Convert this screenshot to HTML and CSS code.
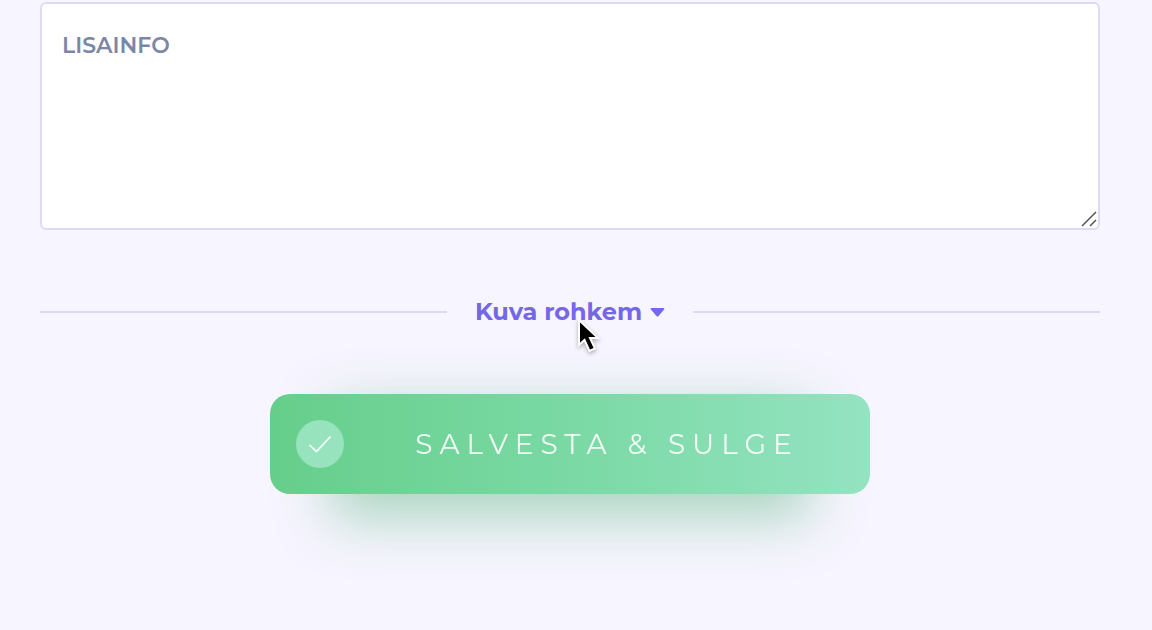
FILE: index.html
```html
<!DOCTYPE html>
<html lang="et">
<head>
    <meta charset="UTF-8">
    <meta name="viewport" content="width=device-width, initial-scale=1.0">
    <title>Lisainfo</title>
    <link rel="stylesheet" href="styles.css">
</head>
<body>
    <form class="details-form">
        <div class="field">
            <textarea id="info" class="field-input" placeholder="LISAINFO" aria-label="LISAINFO"></textarea>
            <svg class="field-grip" viewBox="0 0 16 16" aria-hidden="true">
                <path d="M1 15L15 1M9 15L15 9"/>
            </svg>
        </div>

        <div class="divider">
            <button type="button" class="show-more">
                <span>Kuva rohkem</span>
                <svg class="caret" viewBox="0 0 14 9" aria-hidden="true">
                    <path d="M1.200 0H12.800Q14.600 0.400 13.400 1.800L8 8Q7 9 6 8L0.600 1.800Q-0.600 0.400 1.200 0Z"/>
                </svg>
            </button>
            <svg class="pointer" viewBox="0 0 26 36" aria-hidden="true">
                <path d="M3 2V27L8.500 22L13.500 33L19 30.500L14 20H22Z"/>
            </svg>
        </div>

        <button type="submit" class="save">
            <span class="save-icon">
                <svg viewBox="0 0 24 24" aria-hidden="true">
                    <path d="M1.500 13L8.500 19.500L22.500 4.500"/>
                </svg>
            </span>
            <span class="save-label">SALVESTA &amp; SULGE</span>
        </button>
    </form>
</body>
</html>
```

FILE: styles.css
```css
:root {
    --page: #f7f5ff;
    --border: #dedaf5;
    --purple: #7467e8;
    --muted: #7c87a8;
}

* {
    box-sizing: border-box;
    margin: 0;
    padding: 0;
}

body {
    min-height: 100vh;
    background-color: var(--page);
    font-family: Montserrat, Inter, sans-serif;
}

button {
    border: none;
    font-family: inherit;
    cursor: pointer;
}

.details-form {
    display: flex;
    flex-direction: column;
    padding: 2px 52px 100px 40px;
}

.field {
    position: relative;
    display: flex;
}

.field-input {
    width: 100%;
    height: 228px;
    padding: 28px 20px;
    border: 2px solid var(--border);
    border-radius: 6px;
    background-color: #fff;
    color: var(--muted);
    font-family: inherit;
    font-size: 22px;
    font-weight: 600;
    line-height: 28px;
    resize: vertical;
    outline: none;
}

.field-input::placeholder {
    color: var(--muted);
}

.field-input::-webkit-resizer {
    display: none;
}

.field-grip {
    position: absolute;
    right: 3px;
    bottom: 3px;
    width: 16px;
    height: 16px;
    fill: none;
    stroke: #555;
    stroke-width: 1.5;
    pointer-events: none;
}

.divider {
    position: relative;
    display: flex;
    align-items: center;
    gap: 28px;
    margin: 62px 0;
}

.divider::before,
.divider::after {
    content: "";
    flex: 1;
    height: 2px;
    background-color: var(--border);
}

.show-more {
    display: flex;
    align-items: center;
    gap: 8px;
    background: none;
    color: var(--purple);
    font-size: 24px;
    font-weight: 700;
    line-height: 40px;
}

.caret {
    width: 15px;
    height: 9px;
    fill: #7467f0;
}

.pointer {
    position: absolute;
    left: 50%;
    top: 26px;
    width: 26px;
    height: 36px;
    margin-left: 6px;
    fill: #000;
    stroke: #fff;
    stroke-width: 2;
    filter: drop-shadow(0 2px 2px rgba(0, 0, 0, 0.3));
    pointer-events: none;
}

.save {
    position: relative;
    z-index: 0;
    display: flex;
    align-items: center;
    align-self: center;
    width: 100%;
    max-width: 600px;
    padding: 26px;
    background: none;
    color: #fff;
}

/* soft glow under the button */
.save::before {
    content: "";
    position: absolute;
    inset: 15px 60px -25px;
    z-index: -2;
    background-color: #62b583;
    opacity: 0.5;
    filter: blur(28px);
}

.save::after {
    content: "";
    position: absolute;
    inset: 0;
    z-index: -1;
    border-radius: 20px;
    background: linear-gradient(90deg, #66ce8b, #7ad9a4 50%, #94e3c1);
}

.save-icon {
    display: flex;
    align-items: center;
    justify-content: center;
    width: 48px;
    height: 48px;
    border-radius: 50%;
    background-color: rgba(170, 235, 210, 0.7);
}

.save-icon svg {
    width: 24px;
    height: 24px;
    fill: none;
    stroke: #fff;
    stroke-width: 1.6;
}

.save-label {
    flex: 1;
    padding-left: 46px;
    padding-right: 20px;
    font-family: Montserrat, Lato, sans-serif;
    font-size: 28px;
    font-weight: 400;
    line-height: 48px;
    letter-spacing: 7px;
    white-space: nowrap;
    opacity: 0.9;
}
```
